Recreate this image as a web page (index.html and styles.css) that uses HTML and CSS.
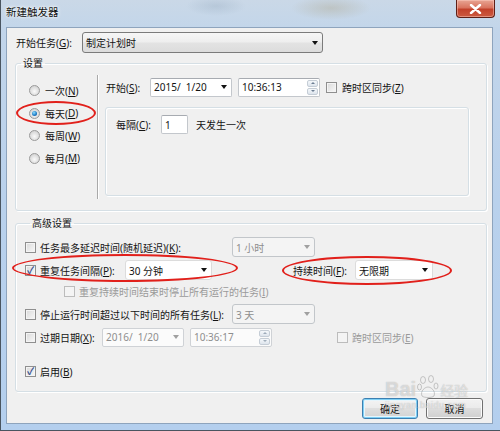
FILE: index.html
```html
<!DOCTYPE html>
<html>
<head>
<meta charset="utf-8">
<link rel="stylesheet" href="styles.css">
</head>
<body>
<div class="window">
  <div class="titlebar">
    <span class="title">新建触发器</span>
    <span class="close"><svg width="13" height="10" viewBox="0 0 13 10"><path d="M2 1 L11 9 M11 1 L2 9" stroke="#fff" stroke-width="2.4" stroke-linecap="round"/></svg></span>
  </div>
  <div class="client">
    <div class="top-row">
      <span class="lbl-start-task">开始任务(<u>G</u>):</span>
      <div class="combo combo-main"><span>制定计划时</span><i class="arrow"></i></div>
    </div>

    <fieldset class="group settings">
      <legend>设置</legend>
      <div class="radios">
        <div class="radio-row"><span class="radio"></span>一次(<u>N</u>)</div>
        <div class="radio-row"><span class="radio on"></span>每天(<u>D</u>)</div>
        <div class="radio-row"><span class="radio"></span>每周(<u>W</u>)</div>
        <div class="radio-row"><span class="radio"></span>每月(<u>M</u>)</div>
      </div>
      <div class="vsep"></div>
      <div class="sched">
        <div class="start-row">
          <span class="lbl-start">开始(<u>S</u>):</span>
          <div class="field date"><span>2015/&nbsp; 1/20</span><i class="arrow"></i></div>
          <div class="field time"><span>10:36:13</span><span class="spin"><b class="up"></b><b class="down"></b></span></div>
          <span class="check"></span>
          <span class="lbl-check">跨时区同步(<u>Z</u>)</span>
        </div>
        <div class="inner-box">
          <div class="every-row">
            <span class="lbl-every">每隔(<u>C</u>):</span>
            <div class="field num">1</div>
            <span class="lbl-days">天发生一次</span>
          </div>
        </div>
      </div>
    </fieldset>

    <fieldset class="group advanced">
      <legend>高级设置</legend>
      <div class="arow r1">
        <span class="check"></span>
        <span class="lbl-long">任务最多延迟时间(随机延迟)(<u>K</u>):</span>
        <div class="combo dis w83"><span>1 小时</span><i class="arrow"></i></div>
      </div>
      <div class="arow r2">
        <span class="check on"></span>
        <span class="lbl-repeat">重复任务间隔(<u>P</u>):</span>
        <div class="combo white w87"><span>30 分钟</span><i class="arrow"></i></div>
        <span class="lbl-dur">持续时间(<u>F</u>):</span>
        <div class="combo white w78"><span>无限期</span><i class="arrow"></i></div>
      </div>
      <div class="arow r3">
        <span class="check dis"></span>
        <span class="lbl-disabled">重复持续时间结束时停止所有运行的任务(<u>I</u>)</span>
      </div>
      <div class="arow r4">
        <span class="check"></span>
        <span class="lbl-long">停止运行时间超过以下时间的所有任务(<u>L</u>):</span>
        <div class="combo dis w83"><span>3 天</span><i class="arrow"></i></div>
      </div>
      <div class="arow r5">
        <span class="check"></span>
        <span class="lbl-expire">过期日期(<u>X</u>):</span>
        <div class="field date dis"><span>2016/&nbsp; 1/20</span><i class="arrow"></i></div>
        <div class="field time dis"><span>10:36:17</span><span class="spin"><b class="up"></b><b class="down"></b></span></div>
        <span class="check dis gap-tz"></span>
        <span class="lbl-disabled">跨时区同步(<u>E</u>)</span>
      </div>
      <div class="arow r6">
        <span class="check on"></span>
        <span class="lbl-enable">启用(<u>B</u>)</span>
      </div>
    </fieldset>

    <div class="buttons">
      <button class="btn default">确定</button>
      <button class="btn">取消</button>
    </div>
  </div>

  <div class="mark e1"></div>
  <div class="mark e2"></div>
  <div class="mark e3"></div>

  <div class="watermark">
    <div class="wm-top"><span class="wm-bai">Bai</span><svg class="wm-paw" width="22" height="24" viewBox="0 0 22 24"><g fill="none" stroke="rgba(150,150,150,0.5)" stroke-width="1"><ellipse cx="6" cy="5" rx="2.5" ry="3.5"/><ellipse cx="14" cy="4" rx="2.5" ry="3.5"/><ellipse cx="2.5" cy="12" rx="2" ry="3"/><ellipse cx="19" cy="11" rx="2" ry="3"/><path d="M5 21 C3 16 8 12 11 12 C14 12 19 16 17 21 C15 23 7 23 5 21 Z"/></g></svg><span class="wm-jy">经验</span></div>
    <div class="wm-url">jingyan.baidu.com</div>
  </div>
</div>
</body>
</html>
```
FILE: styles.css
```css
* { box-sizing: border-box; }
html, body { margin: 0; padding: 0; }
body {
  width: 500px; height: 431px; overflow: hidden;
  font-family: "Noto Sans", "Noto Sans CJK SC", sans-serif;
  font-size: 10px; color: #141414;
  background: #fff;
}
u { text-decoration: underline; text-underline-offset: 1px; text-decoration-thickness: 1px; }

.window {
  position: relative;
  width: 500px; height: 431px;
  display: flex; flex-direction: column;
  background: linear-gradient(180deg, #cbd9e8 0px, #c2d5ea 27px, #b9d1ec 200px, #b4cfee 431px);
  border-left: 1px solid #4a5560;
  border-bottom: 1px solid #4a5560;
}

.titlebar {
  height: 27px; flex: none;
  display: flex; align-items: flex-start;
  background:
    radial-gradient(ellipse 40px 12px at 330px 8px, rgba(170,160,130,0.35), rgba(170,160,130,0) ),
    radial-gradient(ellipse 30px 10px at 215px 6px, rgba(150,170,190,0.35), rgba(150,170,190,0)),
    linear-gradient(180deg, #cad8e7, #c3d6ea);
}
.title {
  padding: 4px 0 0 5px;
  font-size: 10.5px; color: #111;
  text-shadow: 0 0 4px #fff, 0 0 2px #fff;
}
.close {
  margin-left: auto; margin-right: 5px;
  width: 39px; height: 18px;
  display: flex; align-items: center; justify-content: center;
  border: 1px solid #5e1f16; border-top: none;
  border-radius: 0 0 4px 4px;
  background: linear-gradient(180deg, #e8a593 0%, #d9745f 45%, #c2412a 55%, #cc5a40 100%);
  box-shadow: inset 0 0 0 1px rgba(255,210,200,0.45);
}

.client {
  margin: 0 7px 6px 5px;
  flex: 1;
  background: #f0f0f0;
  border: 1px solid #8ea4bd;
  display: flex; flex-direction: column;
}

/* top row */
.top-row { display: flex; align-items: center; height: 21px; margin-top: 4px; padding-left: 9px; }
.lbl-start-task { width: 66px; }
.combo {
  display: flex; align-items: center;
  height: 20px;
  border: 1px solid #8a8a8a; border-radius: 3px;
  padding-left: 3px;
}
.combo .arrow, .field .arrow {
  margin-left: auto; margin-right: 4px;
  width: 0; height: 0;
  border-left: 3.5px solid transparent; border-right: 3.5px solid transparent;
  border-top: 4px solid #111;
}
.combo-main {
  width: 241px; height: 21px;
  border-color: #7b7b7b;
  background: linear-gradient(180deg, #f6f6f6 0%, #eeeeee 48%, #e3e3e3 52%, #dcdcdc 100%);
}

/* group boxes */
.group {
  margin: 0 5px 0 8px; padding: 0;
  border: 1px solid #d5dfe5; border-radius: 3px;
  box-shadow: inset 1px 1px 0 #fff, 1px 1px 0 #fff;
  min-width: 0;
}
.group legend {
  margin-left: 5px; padding: 0 2px;
  line-height: 14px;
}
.settings { margin-top: 3px; display: flex; padding-bottom: 11px; }

.radios { width: 81px; flex: none; padding: 10px 0 0 13px; }
.radio-row { display: flex; align-items: center; height: 22.5px; margin-top: -11px; margin-bottom: 11px; }
.radio-row:first-child { margin-top: -0.5px; }
.radio {
  width: 11px; height: 11px; border-radius: 50%;
  border: 1px solid #9a9a9a;
  background: radial-gradient(circle at 50% 60%, #fafafa 0, #e6e6e6 40%, #c9c9c9 100%);
  margin-right: 5px;
  display: flex; align-items: center; justify-content: center;
}
.radio.on::after {
  content: ""; width: 5px; height: 5px; border-radius: 50%;
  background: radial-gradient(circle at 40% 35%, #8fe0ff 0, #1f7ec9 55%, #0d4a8a 100%);
}

.vsep { width: 2px; flex: none; margin-top: 5px; height: 124px; border-left: 1px solid #a9a9a9; border-right: 1px solid #fff; }
.sched { margin-left: 6px; display: flex; flex-direction: column; }
.start-row { display: flex; align-items: center; height: 18px; margin-top: 8px; padding-left: 1px; }
.lbl-start { width: 44px; }
.field {
  display: flex; align-items: center;
  height: 19px;
  background: #fff;
  border: 1px solid #c3c7cc; border-top-color: #a7abb1;
  border-radius: 2px;
  padding-left: 3px;
}
.field.date { width: 82px; }
.field.time { width: 82px; margin-left: 6px; padding-right: 1px; }
.spin { margin-left: auto; display: flex; flex-direction: column; gap: 1px; }
.spin b {
  width: 11px; height: 7px;
  border: 1px solid #c5cdd6; border-radius: 2px;
  background: linear-gradient(#f5f8fb, #dde4ec);
  display: flex; align-items: center; justify-content: center;
}
.spin b::after { content: ""; width: 0; height: 0; border-left: 2px solid transparent; border-right: 2px solid transparent; }
.spin .up::after { border-bottom: 2px solid #6d7e93; }
.spin .down::after { border-top: 2px solid #6d7e93; }

.check {
  width: 11px; height: 11px; flex: none;
  border: 1px solid #8f8f8f;
  background: linear-gradient(135deg, #d9d9d9, #f8f8f8);
  box-shadow: inset 0 0 0 1px #f4f4f4;
  display: flex; align-items: center; justify-content: center;
  font-size: 10px; line-height: 1;
}
.check.on::after { content: "✓"; color: #38508f; font-weight: bold; font-size: 10px; margin-top: -1px; }
.check.dis { border-color: #bcbcbc; background: #f4f4f4; box-shadow: none; }
.start-row .check { margin-left: 6px; }
.lbl-check { margin-left: 5px; }

.inner-box {
  margin-top: 11px;
  width: 364px; height: 89px;
  border: 1px solid #d5dfe5; border-radius: 3px;
  box-shadow: inset 1px 1px 0 #fff, 1px 1px 0 #fff;
  padding: 7px 0 0 10px;
}
.every-row { display: flex; align-items: center; height: 19px; }
.lbl-every { width: 45px; }
.field.num { width: 27px; height: 19px; }
.lbl-days { margin-left: 8px; }

/* advanced */
.advanced { margin-top: 5px; padding: 0 0 10px 9px; }
.arow { display: flex; align-items: center; height: 20px; margin-top: 3px; }
.arow.r1 { margin-top: 7px; }
.arow.r3 { margin-top: 1px; padding-left: 39px; }
.arow.r6 { margin-top: 14px; }
.arow .check + span { margin-left: 4px; }
.lbl-long { width: 192px; }
.lbl-repeat { width: 85px; }
.lbl-dur { margin-left: 81px; width: 62px; }
.lbl-expire { width: 62px; }
.lbl-disabled { color: #9a9a9a; }
.w83 { width: 83px; }
.w87 { width: 87px; }
.w78 { width: 78px; }
.combo.white { background: #fff; border-color: #dcdcdc; height: 20px; }
.combo.dis { background: #f4f4f4; border-color: #c2c6ca; color: #8e8e8e; }
.combo.dis .arrow { border-top-color: #a0a0a0; }
.field.dis { color: #8e8e8e; border-color: #cfd2d6; background: #fbfbfb; }
.field.dis .arrow { border-top-color: #a0a0a0; }
.field.dis .spin b::after { opacity: 0.6; }
.gap-tz { margin-left: 65px; }

/* buttons */
.buttons { display: flex; justify-content: flex-end; gap: 8px; margin-top: 6px; padding-right: 9px; }
.btn {
  font: inherit; color: #141414;
  width: 57px; height: 21px; padding: 0;
  border: 1px solid #707070; border-radius: 3px;
  background: linear-gradient(180deg, #f2f2f2 0%, #ebebeb 45%, #dddddd 50%, #cfcfcf 100%);
  box-shadow: inset 0 0 0 1px #fbfbfb;
}
.btn.default {
  width: 56px;
  border-color: #3c7fb1;
  background: linear-gradient(180deg, #f4f4f4 0%, #ececec 45%, #dfdfdf 50%, #d3d3d3 100%);
  box-shadow: inset 0 0 0 1px #7fd0f5, inset 0 0 0 2px #e6f5fc;
}

/* red hand-drawn marks (overlay) */
.mark { position: absolute; border: 2px solid #e1201b; border-radius: 50%; }
.e1 { left: 15px; top: 101px; width: 80px; height: 24px; }
.e2 { left: 11px; top: 254px; width: 226px; height: 28px; }
.e3 { left: 281px; top: 256px; width: 170px; height: 29px; }

/* watermark overlay */
.watermark { position: absolute; left: 384px; top: 375px; color: rgba(255,255,255,0.55); pointer-events: none; }
.wm-top { display: flex; align-items: flex-end; }
.wm-bai { font-family: "Liberation Sans", sans-serif; font-size: 20px; font-weight: bold; line-height: 20px; text-shadow: 0 0 1px rgba(120,120,120,0.6); }
.wm-jy { font-size: 14px; line-height: 16px; text-shadow: 0 0 1px rgba(120,120,120,0.6); }
.wm-paw { margin: 0 1px; }
.wm-url { font-family: "Liberation Sans", sans-serif; font-size: 9px; margin-top: 1px; letter-spacing: 0.5px; text-shadow: 0 0 1px rgba(120,120,120,0.6); }
```
